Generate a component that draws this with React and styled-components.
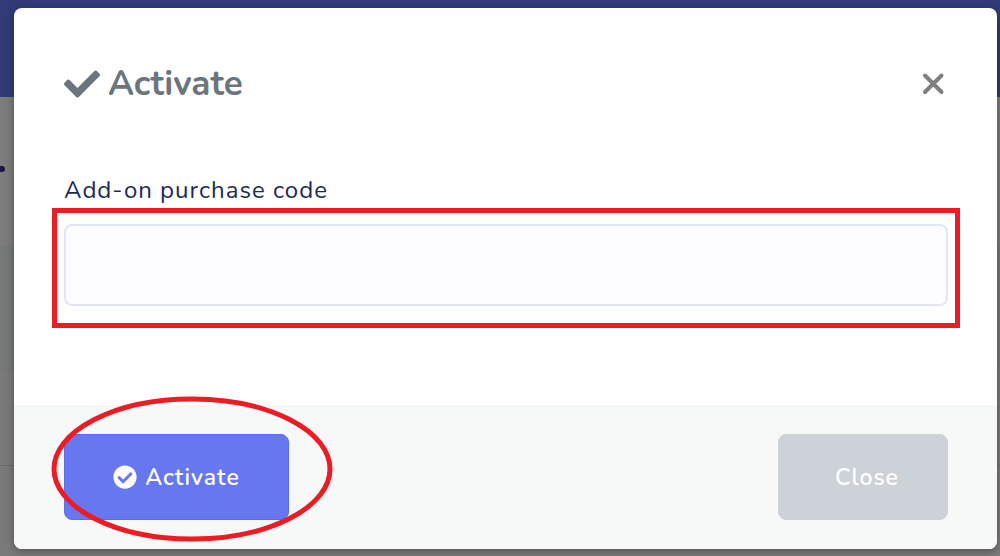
import React from "react";
import styled, { createGlobalStyle } from "styled-components";
import { FaCheck, FaCheckCircle } from "react-icons/fa";

const GlobalStyle = createGlobalStyle`
  *, *::before, *::after { box-sizing: border-box; }
  body {
    margin: 0;
    font-family: Nunito, Lato, "Open Sans", sans-serif;
    background: #7a7a7a;
  }
`;

const Page = styled.div`
  position: relative;
  display: flex;
  flex-direction: column;
  min-height: 100vh;
  overflow: hidden;
`;

const Navbar = styled.div`
  height: 97px;
  background: #323b78;
`;

const PageTitle = styled.div`
  display: flex;
  align-items: center;
  height: 148px;
  padding-bottom: 4px;
  background: #7c7c7c;
`;

const TitleMark = styled.span`
  width: 5px;
  height: 6px;
  border-radius: 0 3px 3px 0;
  background: #1f1442;
`;

const PageBand = styled.div`
  height: 127px;
  background: #767978;
`;

const PageRow = styled.div`
  height: 94px;
  border-bottom: 1px solid #6c6c6c;
`;

const Overlay = styled.div`
  position: absolute;
  inset: 0;
  display: flex;
  align-items: flex-start;
  padding: 8px 3px 7px 14px;
`;

const Dialog = styled.section`
  flex: 1;
  border-radius: 8px;
  background: #fff;
  overflow: hidden;
  box-shadow: 0 2px 8px rgba(0, 0, 0, 0.35);
`;

const Header = styled.header`
  display: flex;
  align-items: center;
  justify-content: space-between;
  padding: 51px 49px 0 50px;
`;

const Title = styled.h1`
  display: flex;
  align-items: center;
  gap: 8px;
  margin: 0;
  font-size: 35px;
  line-height: 50px;
  font-weight: 700;
  color: #6c757d;
`;

const CloseIconButton = styled.button`
  display: flex;
  padding: 0;
  border: 0;
  background: none;
  color: #7f7f7f;
  cursor: pointer;
`;

const Body = styled.div`
  padding: 63px 49px 99px 50px;
`;

const Label = styled.label`
  display: block;
  margin-bottom: 16px;
  font-size: 24px;
  line-height: 36px;
  letter-spacing: 1px;
  color: #212a55;
`;

const Highlight = styled.div`
  position: relative;
  display: flex;

  &::after {
    content: "";
    position: absolute;
    inset: -16px -12px -22px;
    border: 5px solid #ed1c24;
    pointer-events: none;
  }
`;

const CodeInput = styled.input`
  flex: 1;
  min-width: 0;
  height: 82px;
  padding: 20px 30px;
  border: 2px solid #e2e4fc;
  border-radius: 8px;
  background: #fdfdff;
  color: #495057;
  font: inherit;
  font-size: 24px;
  outline: none;
`;

const Footer = styled.footer`
  display: flex;
  align-items: center;
  justify-content: space-between;
  padding: 29px 49px 29px 50px;
  background: #f7f9f9;
`;

const Marked = styled.div`
  position: relative;
`;

const Ring = styled.svg`
  position: absolute;
  left: -13px;
  top: -38px;
  width: 282px;
  height: 146px;
  pointer-events: none;
`;

const Button = styled.button`
  display: flex;
  align-items: center;
  justify-content: center;
  gap: 8px;
  min-width: ${(p) => (p.$primary ? 225 : 170)}px;
  height: 86px;
  padding: ${(p) => (p.$primary ? "0 32px" : "0 32px 0 40px")};
  border: 1px solid ${(p) => (p.$primary ? "#5c6bee" : "#cdd3d8")};
  border-radius: 8px;
  background: ${(p) => (p.$primary ? "#6777ef" : "#cdd1d8")};
  color: #fff;
  font: inherit;
  font-size: 23px;
  font-weight: 600;
  letter-spacing: 1px;
  cursor: pointer;
`;

export default function App() {
  return (
    <>
      <GlobalStyle />
      <Page>
        <Navbar />
        <PageTitle>
          <TitleMark />
        </PageTitle>
        <PageBand />
        <PageRow />
        <Overlay>
          <Dialog role="dialog" aria-labelledby="dialog-title">
            <Header>
              <Title id="dialog-title">
                <FaCheck size={36} aria-hidden="true" />
                Activate
              </Title>
              <CloseIconButton type="button" aria-label="Close dialog">
                <svg width="28" height="28" viewBox="0 0 28 28" aria-hidden="true">
                  <path
                    d="M5 5.5 21.5 22M21.5 5.5 5 22"
                    fill="none"
                    stroke="currentColor"
                    strokeWidth="4"
                    strokeLinecap="round"
                  />
                </svg>
              </CloseIconButton>
            </Header>
            <Body>
              <Label htmlFor="purchase-code">Add-on purchase code</Label>
              <Highlight>
                <CodeInput id="purchase-code" type="text" />
              </Highlight>
            </Body>
            <Footer>
              <Marked>
                <Button type="button" $primary>
                  <FaCheckCircle size={24} aria-hidden="true" />
                  Activate
                </Button>
                <Ring viewBox="0 0 282 146" aria-hidden="true">
                  <ellipse
                    cx="141"
                    cy="73"
                    rx="138"
                    ry="70"
                    fill="none"
                    stroke="#ed1c24"
                    strokeWidth="5"
                  />
                </Ring>
              </Marked>
              <Button type="button">Close</Button>
            </Footer>
          </Dialog>
        </Overlay>
      </Page>
    </>
  );
}
